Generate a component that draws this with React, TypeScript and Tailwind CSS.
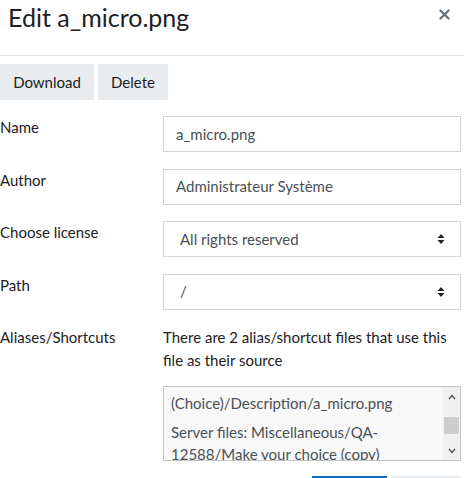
import React from "react";

const font = { fontFamily: "Lato, 'Noto Sans', sans-serif" };

function Arrows() {
  return (
    <svg width="8" height="12" viewBox="0 0 8 12" className="text-[#1d2125]">
      <path d="M4 1 L7.5 5 H0.5 Z" fill="currentColor" />
      <path d="M4 11 L7.5 7 H0.5 Z" fill="currentColor" />
    </svg>
  );
}

function Row({ label, children }: { label: string; children: React.ReactNode }) {
  return (
    <div className="flex mb-[16.5px]">
      <div className="w-[163px] shrink-0 text-[15px] leading-[23px] text-[#1d2125]">{label}</div>
      <div className="w-[298px]">{children}</div>
    </div>
  );
}

export default function App() {
  return (
    <div className="w-[464px] h-[478px] overflow-hidden bg-white" style={font}>
      <div className="flex items-start justify-between pl-[8px] pr-[14px] h-[56px] border-b border-[#dee2e6]">
        <h5 className="text-[25px] leading-[32px] mt-[1px] text-[#1d2125]">Edit a_micro.png</h5>
        <svg width="11" height="11" viewBox="0 0 11 11" className="mt-[9px]">
          <path d="M1.5 1.5 L9.5 9.5 M9.5 1.5 L1.5 9.5" stroke="#6a737b" strokeWidth="2.4" strokeLinecap="round" />
        </svg>
      </div>
      <div className="flex gap-[4px] mt-[8px] mb-[16px]">
        <button className="h-[36px] w-[94px] bg-[#e9ecef] text-[15px] text-[#1d2125]">Download</button>
        <button className="h-[36px] w-[70px] bg-[#e9ecef] text-[15px] text-[#1d2125]">Delete</button>
      </div>
      <Row label="Name">
        <div className="h-[36px] border border-[#ced4da] flex items-center pl-[12px] text-[15px] text-[#495057]">a_micro.png</div>
      </Row>
      <Row label="Author">
        <div className="h-[36px] border border-[#ced4da] flex items-center pl-[12px] text-[15px] text-[#495057]">Administrateur Système</div>
      </Row>
      <Row label="Choose license">
        <div className="h-[36px] border border-[#ced4da] flex items-center justify-between pl-[16px] pr-[15px] text-[15px] text-[#495057]">
          <span>All rights reserved</span>
          <Arrows />
        </div>
      </Row>
      <Row label="Path">
        <div className="h-[36px] border border-[#ced4da] flex items-center justify-between pl-[16px] pr-[15px] text-[15px] text-[#495057]">
          <span>/</span>
          <Arrows />
        </div>
      </Row>
      <div className="flex">
        <div className="w-[163px] shrink-0 text-[15px] leading-[23px] text-[#1d2125]">Aliases/Shortcuts</div>
        <div className="w-[298px]">
          <p className="text-[15px] leading-[23px] text-[#1d2125]">
            There are 2 alias/shortcut files that use this<br />file as their source
          </p>
          <div className="relative mt-[14px] h-[75px] border border-[#c6c6c6] bg-[#f8f8f8] overflow-hidden">
            <div className="pl-[7px] pr-[20px] text-[15px] leading-[22px] text-[#495057] -mt-[42px] whitespace-nowrap">
              <div className="pb-[7px]">
                <div className="mb-[3px]">
                  <div>Server files: Miscellaneous/QA-</div>
                  <div>12588/Make your choice</div>
                </div>
                <div>(Choice)/Description/a_micro.png</div>
              </div>
              <div>
                <div>Server files: Miscellaneous/QA-</div>
                <div>12588/Make your choice (copy)</div>
              </div>
            </div>
            <div className="absolute right-0 top-0 bottom-0 w-[17px] bg-[#f0f0f0] flex flex-col items-center">
              <svg width="8" height="6" viewBox="0 0 8 6" className="mt-[7px]">
                <path d="M1 5 L4 1.5 L7 5" stroke="#505050" strokeWidth="1.3" fill="none" />
              </svg>
              <div className="mt-[17px] w-[15px] h-[17px] bg-[#cdcdcd]" />
              <svg width="8" height="6" viewBox="0 0 8 6" className="mt-auto mb-[6px]">
                <path d="M1 1 L4 4.5 L7 1" stroke="#505050" strokeWidth="1.3" fill="none" />
              </svg>
            </div>
          </div>
          <div className="flex justify-end gap-[4px] mt-[15px]">
            <button className="h-[36px] w-[75px] bg-[#0f6cbf] text-white text-[15px]">Update</button>
            <button className="h-[36px] w-[70px] bg-[#e9ecef] text-[15px]">Cancel</button>
          </div>
        </div>
      </div>
    </div>
  );
}
